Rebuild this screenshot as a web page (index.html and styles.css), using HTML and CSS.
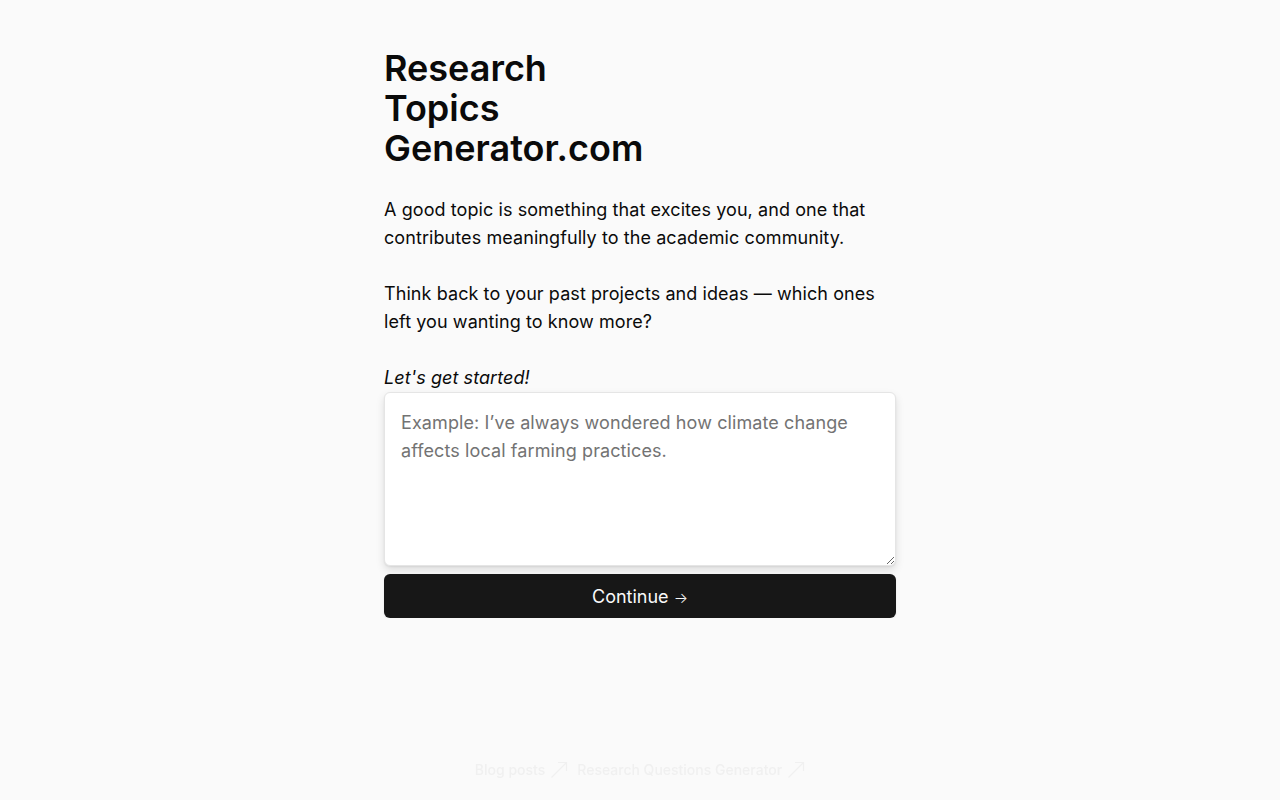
FILE: index.html
```html
<!DOCTYPE html>
<html lang="en">
<head>
<meta charset="utf-8">
<title>Research Topics Generator.com</title>
<link rel="stylesheet" href="styles.css">
</head>
<body>
<main class="page">
  <div class="wrap">
    <h1 class="title">Research<br>Topics<br>Generator.com</h1>
    <p class="text">A good topic is something that excites you, and one that contributes meaningfully to the academic community.</p>
    <p class="text">Think back to your past projects and ideas — which ones left you wanting to know more?</p>
    <p class="lead">Let's get started!</p>
    <textarea class="input" placeholder="Example: I’ve always wondered how climate change affects local farming practices."></textarea>
    <button class="btn">Continue <span class="arrow">→</span></button>
  </div>
</main>
<footer class="foot">
  <a class="link" href="#">Blog posts <svg class="ext" viewBox="0 0 18 18" width="18" height="18"><path d="M1.5 16.5L16.5 1.5M8 1.5h8.5V10" fill="none" stroke="currentColor" stroke-width="1.2"/></svg></a>
  <a class="link" href="#">Research Questions Generator <svg class="ext" viewBox="0 0 18 18" width="18" height="18"><path d="M1.5 16.5L16.5 1.5M8 1.5h8.5V10" fill="none" stroke="currentColor" stroke-width="1.2"/></svg></a>
</footer>
</body>
</html>
```
FILE: styles.css
```css
html, body {
  margin: 0;
  padding: 0;
  background: #fafafa;
  font-family: Inter, "Noto Sans", sans-serif;
  color: #0a0a0a;
}
.page {
  display: flex;
  justify-content: center;
  padding-top: 48px;
}
.wrap {
  width: 512px;
  display: flex;
  flex-direction: column;
}
.title {
  margin: 0 0 28px;
  font-size: 36px;
  line-height: 40px;
  font-weight: 600;
}
.text {
  margin: 0 0 28px;
  font-size: 18px;
  line-height: 28px;
  font-weight: 400;
  letter-spacing: 0.08px;
}
.lead {
  margin: 0;
  font-size: 18px;
  line-height: 28px;
  font-style: italic;
  letter-spacing: 0.08px;
}
.input {
  box-sizing: border-box;
  width: 512px;
  height: 174px;
  margin: 0;
  padding: 16px;
  border: 1px solid #e5e5e5;
  border-radius: 6px;
  background: #fff;
  font-family: Inter, "Noto Sans", sans-serif;
  font-size: 18px;
  line-height: 28px;
  letter-spacing: 0.1px;
  color: #0a0a0a;
  box-shadow: 0 4px 8px rgba(0,0,0,0.12), 0 1px 2px rgba(0,0,0,0.06);
  resize: vertical;
  outline: none;
}
.input::placeholder {
  color: #737373;
}
.btn {
  margin-top: 8px;
  height: 44px;
  border: 0;
  border-radius: 6px;
  background: #171717;
  color: #fafafa;
  font-family: Inter, "Noto Sans", sans-serif;
  font-size: 18px;
  font-weight: 400;
  box-shadow: 0 1px 2px rgba(0,0,0,0.1);
  cursor: pointer;
}
.arrow {
  font-size: 15px;
  font-weight: 300;
}
.foot {
  position: fixed;
  left: 0;
  right: 0;
  bottom: 20px;
  display: flex;
  justify-content: center;
  gap: 9px;
  font-size: 14px;
  line-height: 20px;
}
.link {
  display: inline-flex;
  align-items: center;
  gap: 5px;
  color: #f0f0f0;
  text-decoration: none;
  font-weight: 500;
}
.ext {
  display: block;
}
```
